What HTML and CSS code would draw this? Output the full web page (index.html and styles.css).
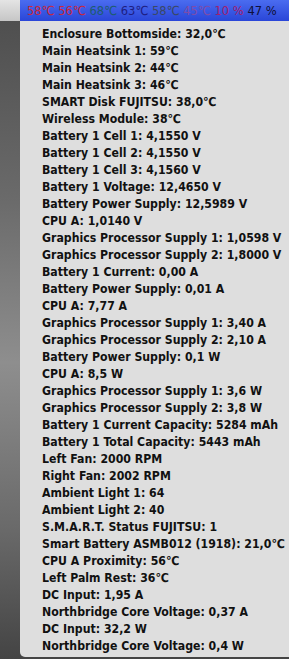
FILE: index.html
```html
<!DOCTYPE html>
<html lang="en">
<head>
    <meta charset="UTF-8">
    <meta name="viewport" content="width=device-width, initial-scale=1.0">
    <title>Sensor Menu</title>
    <link rel="stylesheet" href="styles.css">
</head>
<body>
    <div id="menubar">
        <div class="bar-left"></div>
        <div class="status-item"><span class="t-red">58℃</span> <span class="t-red">56℃</span> <span class="t-teal">68℃</span> <span class="t-navy">63℃</span> <span class="t-slate">58℃</span> <span class="t-faded">45℃</span> <span class="t-magenta">10 %</span> <span class="t-black">47 %</span></div>
    </div>

    <div id="sensor-menu">
        <div class="item">Enclosure Bottomside: 32,0℃</div>
        <div class="item">Main Heatsink 1: 59℃</div>
        <div class="item">Main Heatsink 2: 44℃</div>
        <div class="item">Main Heatsink 3: 46℃</div>
        <div class="item">SMART Disk FUJITSU: 38,0℃</div>
        <div class="item">Wireless Module: 38℃</div>
        <div class="item">Battery 1 Cell 1: 4,1550 V</div>
        <div class="item">Battery 1 Cell 2: 4,1550 V</div>
        <div class="item">Battery 1 Cell 3: 4,1560 V</div>
        <div class="item">Battery 1 Voltage: 12,4650 V</div>
        <div class="item">Battery Power Supply: 12,5989 V</div>
        <div class="item">CPU A: 1,0140 V</div>
        <div class="item">Graphics Processor Supply 1: 1,0598 V</div>
        <div class="item">Graphics Processor Supply 2: 1,8000 V</div>
        <div class="item">Battery 1 Current: 0,00 A</div>
        <div class="item">Battery Power Supply: 0,01 A</div>
        <div class="item">CPU A: 7,77 A</div>
        <div class="item">Graphics Processor Supply 1: 3,40 A</div>
        <div class="item">Graphics Processor Supply 2: 2,10 A</div>
        <div class="item">Battery Power Supply: 0,1 W</div>
        <div class="item">CPU A: 8,5 W</div>
        <div class="item">Graphics Processor Supply 1: 3,6 W</div>
        <div class="item">Graphics Processor Supply 2: 3,8 W</div>
        <div class="item">Battery 1 Current Capacity: 5284 mAh</div>
        <div class="item">Battery 1 Total Capacity: 5443 mAh</div>
        <div class="item">Left Fan: 2000 RPM</div>
        <div class="item">Right Fan: 2002 RPM</div>
        <div class="item">Ambient Light 1: 64</div>
        <div class="item">Ambient Light 2: 40</div>
        <div class="item">S.M.A.R.T. Status FUJITSU: 1</div>
        <div class="item">Smart Battery ASMB012 (1918): 21,0℃</div>
        <div class="item">CPU A Proximity: 56℃</div>
        <div class="item">Left Palm Rest: 36℃</div>
        <div class="item">DC Input: 1,95 A</div>
        <div class="item">Northbridge Core Voltage: 0,37 A</div>
        <div class="item">DC Input: 32,2 W</div>
        <div class="item">Northbridge Core Voltage: 0,4 W</div>
    </div>
</body>
</html>
```

FILE: styles.css
```css
body {
    margin: 0;
    width: 289px;
    height: 659px;
    overflow: hidden;
    font-family: "DejaVu Sans Condensed", "Open Sans", sans-serif;
    background: linear-gradient(to bottom, #4c4c4c 0%, #6a6a6a 30%, #8e8e8e 55%, #6a6a6a 80%, #444 100%);
}

#menubar {
    display: flex;
    height: 21px;
}

.bar-left {
    width: 20px;
    background: linear-gradient(to bottom, #e4e4e4, #c6c6c6);
}

.status-item {
    flex: 1;
    padding-left: 7px;
    font-size: 12.8px;
    line-height: 21px;
    white-space: nowrap;
    background: linear-gradient(to bottom, #4a6cf0, #2a46d8);
}

.t-red { color: #c8283c; }
.t-teal { color: #1e5c70; }
.t-navy { color: #1e1e82; }
.t-slate { color: #3a4866; }
.t-faded { color: #7e4caa; }
.t-magenta { color: #a4206c; }
.t-black { color: #10103a; }

#sensor-menu {
    margin-left: 20px;
    height: 636px;
    box-sizing: border-box;
    padding: 5px 0 0 22px;
    background-color: #dedede;
    border-bottom-left-radius: 5px;
}

.item {
    font-size: 12.2px;
    font-weight: bold;
    line-height: 17px;
    color: #111;
    white-space: nowrap;
}
```
